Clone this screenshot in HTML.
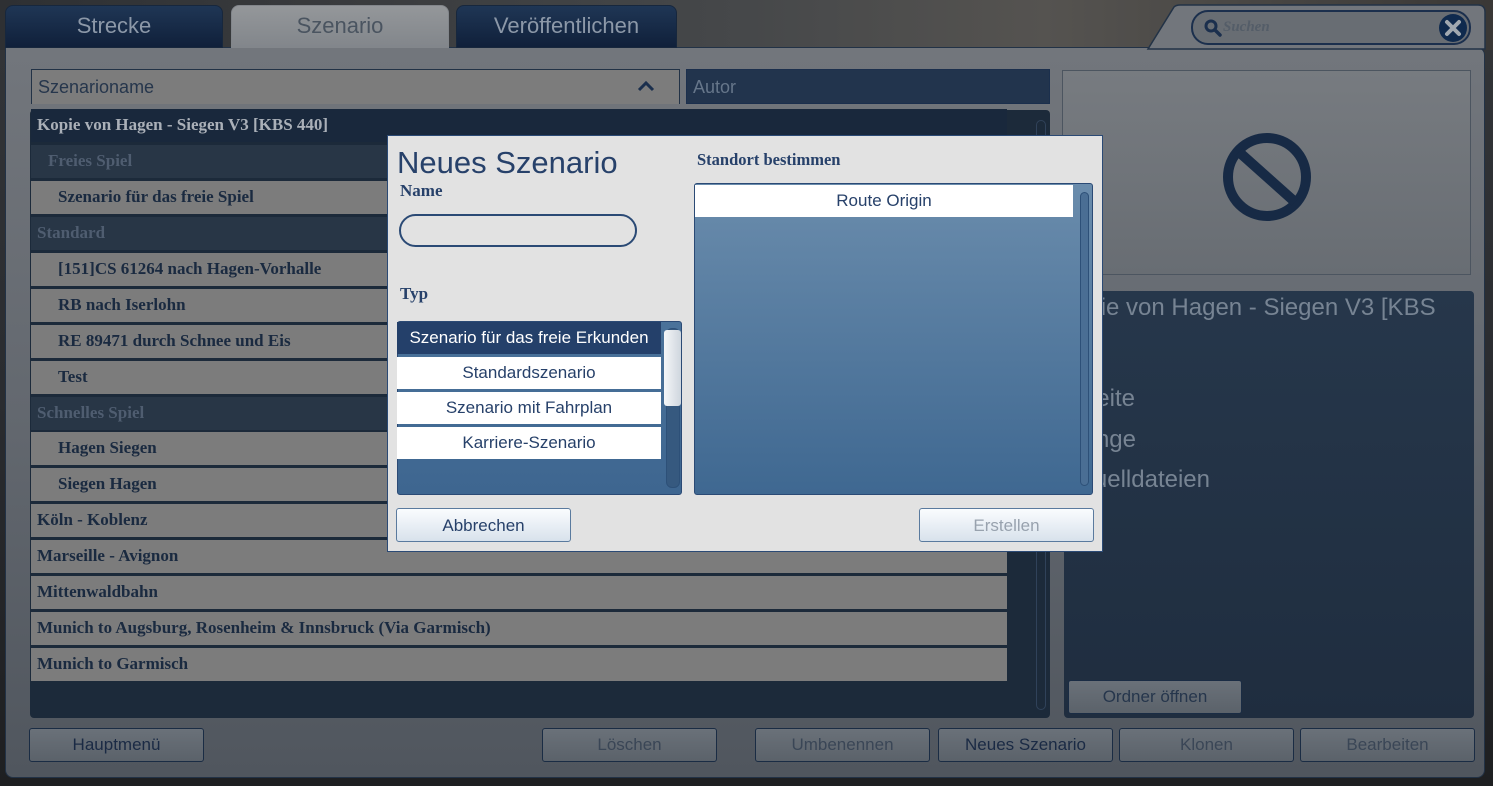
<!DOCTYPE html>
<html><head><meta charset="utf-8"><style>
*{box-sizing:border-box;margin:0;padding:0}
body{width:1493px;height:786px;overflow:hidden;position:relative;background:linear-gradient(180deg,#333538 0%,#2a2c30 50%,#1e1f21 100%);font-family:"Liberation Sans Narrow","Liberation Sans",sans-serif}
.a{position:absolute}
.tab{position:absolute;top:5px;height:43px;border-radius:8px 8px 0 0;font-size:22px;text-align:center;line-height:40px;border:1px solid #17273d}
.dk{background:linear-gradient(180deg,#1f3655,#10203a);color:#8c98a8}
.main{left:5px;top:47px;width:1480px;height:731px;background:linear-gradient(180deg,#72767c 0%,#63686f 50%,#50565e 100%);border-radius:0 8px 8px 8px;border:1px solid #223246}
.row{position:absolute;left:31px;width:976px;height:33px;background:#7c7c7c;font-family:"Liberation Serif",serif;font-weight:bold;font-size:17px;color:#1a2a40;line-height:32px;padding-left:6px}
.hd{background:#283646;color:#4f5d70}
.btn{position:absolute;top:728px;height:34px;width:175px;border:1px solid #1a2c44;border-radius:3px;background:linear-gradient(180deg,#6a7179,#5b626a);font-size:17px;text-align:center;line-height:32px;color:#3a4656}
.ser{font-family:"Liberation Serif",serif;font-weight:bold;color:#27416a}
.it{position:absolute;left:397px;width:264px;height:32px;background:#fff;color:#27416a;font-size:17px;text-align:center;line-height:31px}
.dbtn{position:absolute;top:508px;height:34px;width:175px;border:1px solid #5a7a9e;border-radius:3px;background:linear-gradient(180deg,#fafcfe,#d8e2ec);font-size:17px;text-align:center;line-height:33px;color:#27416a}
.inf{position:absolute;color:#778493;font-size:24px;font-family:"Liberation Sans",sans-serif}
</style></head><body>
<div class="a" style="left:0;top:0;width:1493px;height:50px;background:linear-gradient(90deg,#2e3033,#46484a 50%,#555350 70%,#3a3836)"></div>
<div class="a main"></div>
<div class="tab dk" style="left:5px;width:218px">Strecke</div>
<div class="tab" style="left:231px;width:218px;background:linear-gradient(180deg,#94979a,#82868b);color:#4a5460;border-color:#82868b">Szenario</div>
<div class="tab dk" style="left:456px;width:221px">Veröffentlichen</div>
<svg class="a" style="left:1140px;top:0" width="353" height="50"><path d="M8 49 L34 7 Q36 5 40 5 L338 5 Q345 5 345 12 L345 49 Z" fill="#72767c" stroke="#223246" stroke-width="1.5"/><rect x="52" y="11" width="278" height="33" rx="16" fill="#686d73" stroke="#1b2f4d" stroke-width="2"/><circle cx="71" cy="26" r="5" fill="none" stroke="#1b2f4d" stroke-width="3"/><path d="M75 30 L80 35" stroke="#1b2f4d" stroke-width="3.5" stroke-linecap="round"/><circle cx="313" cy="28" r="14" fill="#0f2a4e"/><path d="M307 22 L319 34 M319 22 L307 34" stroke="#a0a8b0" stroke-width="4" stroke-linecap="round"/><text x="83" y="31" font-family="Liberation Serif" font-style="italic" font-weight="bold" font-size="15" fill="#545d68">Suchen</text></svg>
<div class="a" style="left:31px;top:69px;width:649px;height:35px;background:#7c7c7c;border:1px solid #223246;border-bottom:none;font-size:18px;color:#26364c;line-height:34px;padding-left:6px">Szenarioname</div>
<svg class="a" style="left:637px;top:80px" width="18" height="12"><path d="M2 10 L9 3 L16 10" fill="none" stroke="#1b2f4d" stroke-width="3"/></svg>
<div class="a" style="left:686px;top:69px;width:364px;height:35px;background:#22344d;font-size:18px;color:#66768a;line-height:34px;padding-left:6px;border:1px solid #1b2f4d">Autor</div>
<div class="a" style="left:30px;top:110px;width:1020px;height:608px;background:#1c2a3a;border-radius:4px"></div>
<div class="a" style="left:1036px;top:120px;width:10px;height:590px;border:1px solid #30425a;border-radius:5px"></div>
<div class="row" style="top:109px;background:#19283c;color:#aab0b8">Kopie von Hagen - Siegen V3 [KBS 440]</div>
<div class="row hd" style="top:145px;padding-left:17px">Freies Spiel</div>
<div class="row" style="top:181px;padding-left:27px">Szenario für das freie Spiel</div>
<div class="row hd" style="top:217px">Standard</div>
<div class="row" style="top:253px;padding-left:27px">[151]CS 61264 nach Hagen-Vorhalle</div>
<div class="row" style="top:289px;padding-left:27px">RB nach Iserlohn</div>
<div class="row" style="top:325px;padding-left:27px">RE 89471 durch Schnee und Eis</div>
<div class="row" style="top:361px;padding-left:27px">Test</div>
<div class="row hd" style="top:397px">Schnelles Spiel</div>
<div class="row" style="top:432px;padding-left:27px">Hagen Siegen</div>
<div class="row" style="top:468px;padding-left:27px">Siegen Hagen</div>
<div class="row" style="top:504px">Köln - Koblenz</div>
<div class="row" style="top:540px">Marseille - Avignon</div>
<div class="row" style="top:576px">Mittenwaldbahn</div>
<div class="row" style="top:612px">Munich to Augsburg, Rosenheim &amp; Innsbruck (Via Garmisch)</div>
<div class="row" style="top:648px">Munich to Garmisch</div>
<div class="a" style="left:1062px;top:70px;width:409px;height:205px;background:linear-gradient(180deg,#777b80,#686d73);border:1px solid #4c5560"></div>
<svg class="a" style="left:1222px;top:132px" width="90" height="90"><circle cx="45" cy="45" r="39" fill="none" stroke="#172a45" stroke-width="10"/><path d="M17 20 L73 70" stroke="#172a45" stroke-width="10"/></svg>
<div class="a" style="left:1064px;top:291px;width:410px;height:427px;background:linear-gradient(180deg,#26374b,#1f2d3f);border-radius:4px"></div>
<div class="inf" style="left:1058px;top:294px">Kopie von Hagen - Siegen V3 [KBS</div>
<div class="inf" style="left:1058px;top:328px">440]</div>
<div class="inf" style="left:1030px;top:385px;width:105px;text-align:right">Webseite</div>
<div class="inf" style="left:1030px;top:426px;width:106px;text-align:right">Länge</div>
<div class="inf" style="left:1030px;top:466px;width:180px;text-align:right">Quelldateien</div>
<div class="btn" style="left:1068px;top:680px;width:174px;color:#26364c">Ordner öffnen</div>
<div class="btn" style="left:29px;color:#1a2a44">Hauptmenü</div>
<div class="btn" style="left:542px">Löschen</div>
<div class="btn" style="left:755px">Umbenennen</div>
<div class="btn" style="left:938px;color:#1a2a44">Neues Szenario</div>
<div class="btn" style="left:1119px">Klonen</div>
<div class="btn" style="left:1300px">Bearbeiten</div>
<div class="a" style="left:387px;top:135px;width:716px;height:417px;background:#e2e2e2;border:1px solid #2b4a75"></div>
<div class="a" style="left:397px;top:145px;font-size:31px;color:#27416a">Neues Szenario</div>
<div class="a ser" style="left:400px;top:181px;font-size:17px">Name</div>
<div class="a" style="left:399px;top:214px;width:238px;height:33px;border:2px solid #2b4a75;border-radius:17px"></div>
<div class="a ser" style="left:400px;top:284px;font-size:17px">Typ</div>
<div class="a" style="left:397px;top:321px;width:285px;height:174px;background:linear-gradient(180deg,#4a729a,#3e6690);border-radius:3px;border:1px solid #2b4a75"></div>
<div class="a" style="left:666px;top:328px;width:14px;height:160px;border:1px solid #2d5078;border-radius:6px;background:#36597f"></div>
<div class="a" style="left:664px;top:330px;width:17px;height:76px;background:linear-gradient(90deg,#f4f6f8,#cfd6de);border-radius:3px"></div>
<div class="it" style="top:322px;background:#24406a;color:#fff">Szenario für das freie Erkunden</div>
<div class="it" style="top:357px">Standardszenario</div>
<div class="it" style="top:392px">Szenario mit Fahrplan</div>
<div class="it" style="top:427px">Karriere-Szenario</div>
<div class="a ser" style="left:697px;top:150px;font-size:16.5px">Standort bestimmen</div>
<div class="a" style="left:694px;top:183px;width:399px;height:312px;background:linear-gradient(180deg,#6a8cac,#3f6891);border-radius:3px;border:1px solid #2b4a75"></div>
<div class="a" style="left:1080px;top:192px;width:9px;height:294px;border:1px solid #2d5078;border-radius:5px;background:#4a6e94"></div>
<div class="it" style="left:695px;top:185px;width:378px">Route Origin</div>
<div class="dbtn" style="left:396px">Abbrechen</div>
<div class="dbtn" style="left:919px;color:#98a2ae">Erstellen</div>
</body></html>
